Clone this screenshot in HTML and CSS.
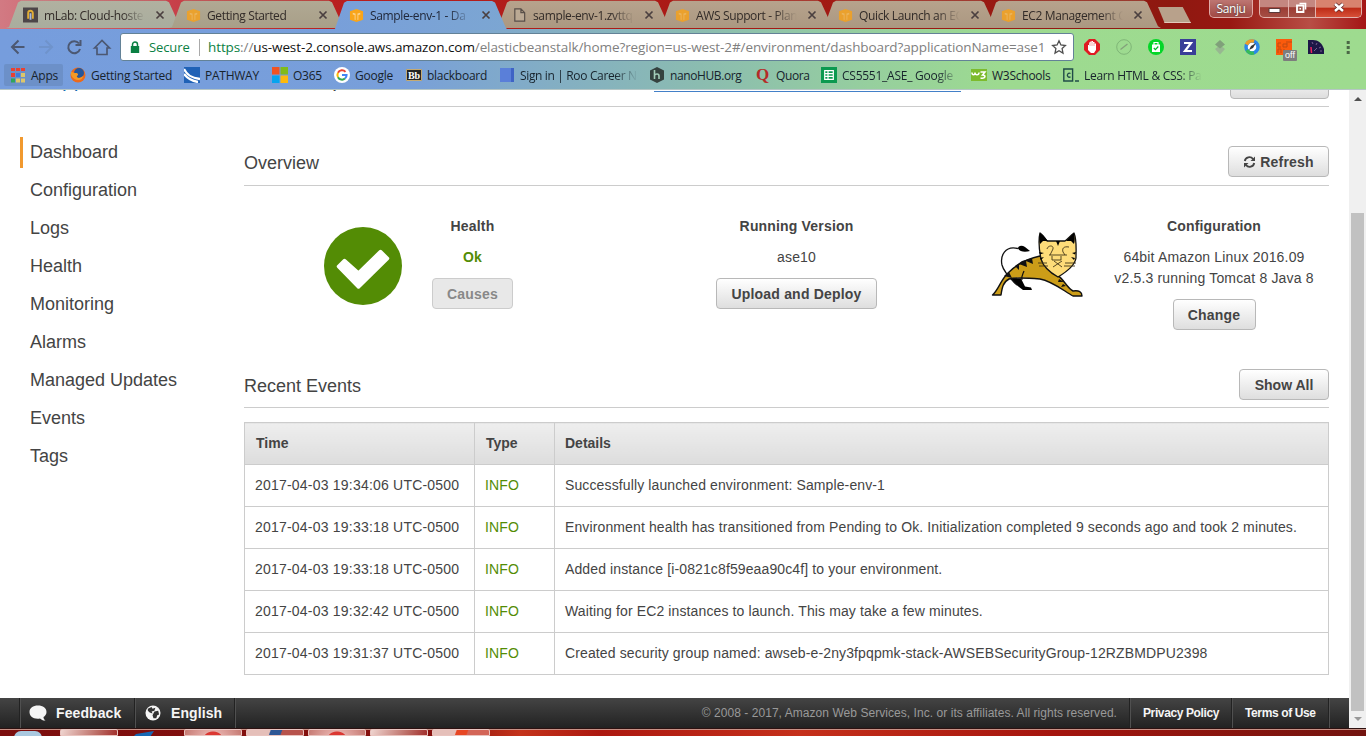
FILE: index.html
```html
<!DOCTYPE html>
<html lang="en">
<head>
<meta charset="utf-8">
<title>Sample-env-1 - Dashboard</title>
<link rel="stylesheet" href="styles.css">
</head>
<body>
<svg class="defs" width="0" height="0">
  <defs>
    <symbol id="cube" viewBox="0 0 16 16"><path fill="#f9a51a" d="M1 4l7-2.500 7 2.500v9l-7 2.500L1 13z"/><path fill="#fbd28b" d="M4 5.500l3 .8v7L6 13V8l-2-.6zM12 5.500l-3 .8v7l1-.3V8l2-.6z"/></symbol>
    <symbol id="cube-dim" viewBox="0 0 16 16"><path fill="#f5a11e" d="M1 4l7-2.500 7 2.500v9l-7 2.500L1 13z"/><path fill="#f6b955" d="M4 5.500l3 .8v7L6 13V8l-2-.6zM12 5.500l-3 .8v7l1-.3V8l2-.6z"/></symbol>
    <symbol id="close" viewBox="0 0 10 10"><path d="M1.500 1.500l7 7M8.500 1.500l-7 7" stroke="#4b4040" stroke-width="1.700" fill="none"/></symbol>
  </defs>
</svg>
<header class="chrome">
  <div class="tabstrip">
    <div class="tab t1"><svg class="fav" viewBox="0 0 16 16"><path fill="#4c4548" d="M0 0h16v16H0z"/><path d="M5.500 12V6a2.500 2.500 0 0 1 5 0v6" fill="none" stroke="#e1ad35" stroke-width="2"/><path d="M8 6v7" stroke="#a9b8dd" stroke-width="2"/></svg><span class="tl">mLab: Cloud-hoste</span><svg class="x"><use href="#close"/></svg></div>
    <div class="tab t2"><svg class="fav dim"><use href="#cube-dim"/></svg><span class="tl">Getting Started</span><svg class="x"><use href="#close"/></svg></div>
    <div class="tab active"><svg class="fav"><use href="#cube"/></svg><span class="tl">Sample-env-1 - Da</span><svg class="x"><use href="#close"/></svg></div>
    <div class="tab"><svg class="fav" viewBox="0 0 16 16"><path d="M3 1.500h6.500l4 4v9H3zM9.500 1.500v4h4" fill="#bba994" stroke="#594f49" stroke-width="1.300"/></svg><span class="tl">sample-env-1.zvttq</span><svg class="x"><use href="#close"/></svg></div>
    <div class="tab"><svg class="fav dim"><use href="#cube-dim"/></svg><span class="tl">AWS Support - Plan</span><svg class="x"><use href="#close"/></svg></div>
    <div class="tab"><svg class="fav dim"><use href="#cube-dim"/></svg><span class="tl">Quick Launch an EC</span><svg class="x"><use href="#close"/></svg></div>
    <div class="tab"><svg class="fav dim"><use href="#cube-dim"/></svg><span class="tl">EC2 Management C</span><svg class="x"><use href="#close"/></svg></div>
    <div class="newtab"></div>
    <div class="user">Sanju</div>
    <div class="winbtns">
      <span class="wb"><svg width="28" height="18"><path d="M9 8.500h11v4H9z" fill="#fff" stroke="#5b3a3a"/></svg></span>
      <span class="wb"><svg width="26" height="18"><path d="M10.500 3.500h6v6" fill="none" stroke="#fff" stroke-width="1.600"/><path d="M8 5.500h6.500V12H8z" fill="#a35a52" stroke="#fff" stroke-width="1.800"/><path d="M10.500 8h1.500v1.500h-1.500z" fill="#fff"/></svg></span>
      <span class="wb close"><svg width="46" height="18"><path d="M19 4l8 7M27 4l-8 7" stroke="#5b2020" stroke-width="4"/><path d="M19 4l8 7M27 4l-8 7" stroke="#fff" stroke-width="2.600"/></svg></span>
    </div>
  </div>
  <div class="toolbar">
    <svg class="nav" width="114" height="26" viewBox="0 0 114 26" fill="none" stroke="#4c5872" stroke-width="2">
      <path d="M24.500 13H12.500M18.500 6.500L12 13l6.500 6.500"/>
      <path d="M39 13h12M45.500 6.500L52 13l-6.500 6.500" stroke="#6f93cb"/>
      <path d="M79 9.500A6 6 0 1 0 80 15M80.500 6v5h-5"/>
      <path d="M94.500 14l7.500-7.500 7.500 7.500h-2.500v6.500h-10V14z" stroke-width="1.700"/>
    </svg>
    <div class="omnibox">
      <svg class="lock" viewBox="0 0 10 13"><path d="M2.500 6V3.500a2.500 2.500 0 0 1 5 0V6" fill="none" stroke="#0b8043" stroke-width="1.500"/><path d="M.8 5h8.400v7H.8z" fill="#0b8043"/></svg>
      <span class="secure">Secure</span>
      <span class="url"><i>https</i>://<b>us-west-2.console.aws.amazon.com</b>/elasticbeanstalk/home?region=us-west-2#/environment/dashboard?applicationName=ase1</span>
      <svg class="star" viewBox="0 0 16 16"><path d="M8 1.800l1.900 4.200 4.500.5-3.300 3.100.9 4.500L8 11.800 4 14.100l.9-4.500L1.600 6.500l4.500-.5z" fill="none" stroke="#4f4f4f" stroke-width="1.300"/></svg>
    </div>
    <div class="exts">
      <svg viewBox="0 0 16 16"><path fill="#e01b22" d="M5 0h6l5 5v6l-5 5H5l-5-5V5z"/><path fill="#fff" d="M4 6h1V3.500h1.300V2.500h1.400V2H9v1h1.500v1.500H12V11l-2 3H7l-3-3z"/><path d="M6 4v3M8 3v4M10 4v3" stroke="#e01b22" stroke-width=".4"/></svg>
      <svg viewBox="0 0 16 16"><circle cx="8" cy="8" r="7.300" fill="none" stroke="#7fb577"/><path d="M4.500 10.500L11.500 5" stroke="#83a07b" stroke-width="1.300"/></svg>
      <svg viewBox="0 0 16 16"><circle cx="8" cy="8" r="8" fill="#04d628"/><path d="M4 5.500h8V13H4z" fill="#fff"/><path d="M6 6V3.500h4V6" stroke="#fff" stroke-width="1.200" fill="none"/><path d="M5.800 9l1.600 1.600L10.300 7.500" fill="none" stroke="#04b528" stroke-width="1.200"/></svg>
      <svg viewBox="0 0 16 16"><path fill="#393e98" d="M0 0h16v16H0z"/><path d="M4 4h7L5 12h7" fill="none" stroke="#fff" stroke-width="2.200"/></svg>
      <svg viewBox="0 0 16 16"><path fill="#98b791" d="M8 6l5 4-5 5.500L3 10z"/><path fill="#80a07a" d="M8 1l5 4.500-5 4-5-4z"/></svg>
      <svg viewBox="0 0 16 16"><circle cx="8" cy="8" r="6" fill="#fff" stroke="#2c87e9" stroke-width="3.500"/><path d="M2.500 5.500A6 6 0 0 1 10 2.300" fill="none" stroke="#ef9d24" stroke-width="3.500"/><path d="M3 11a6 6 0 0 0 7 2.800" fill="none" stroke="#36bb58" stroke-width="3.500"/><path d="M5 11l2-4 5-3-3 5z" fill="#333"/></svg>
      <svg viewBox="0 0 16 16"><path fill="#fc5a0b" d="M0 0h16v16H0z"/><path d="M5 4H2v4h3M11 2v6H7V5h4M13 2v2M15 2v2M2 14v-4h3v4M8 10v4" fill="none" stroke="#c04a13"/></svg>
      <svg viewBox="0 0 16 16"><path fill="#1d1747" d="M0 1h5c5 0 9 3 11 9v5H0z"/><path d="M3.500 14L3 8" stroke="#ef245d" stroke-width="1.500"/><path d="M4 3l1 2M9 4L8 6M13 8l-2 1M14 12h-2M6 12l3-3" stroke="#77618f" fill="none"/></svg>
      <svg viewBox="0 0 16 16"><path d="M6.700 2h3v3h-3zM6.700 7h3v3h-3zM6.700 12h3v3h-3z" fill="#4b6746"/></svg>
      <span class="off">off</span>
    </div>
  </div>
  <nav class="bookmarks">
    <a class="w-apps"><svg viewBox="0 0 16 16"><path fill="#e84132" d="M1 1h4v3H1zM6 1h4v3H6zM11 1h4v3h-4zM1 6h4v4H1z"/><path fill="#ddc66b" d="M11 6h4v4h-4zM6 11.500h4v4H6zM11 11.500h4v4h-4z"/><path fill="#3f79dd" d="M6 6h4v4H6z"/><path fill="#2fa55a" d="M1 11.500h4v4H1z"/></svg>Apps</a>
    <a class="w-start"><svg viewBox="0 0 16 16"><circle cx="8" cy="8" r="7.500" fill="#eb6a1c"/><circle cx="9" cy="6" r="5" fill="#26569a"/><path d="M1 5c2 0 2 1 5 1 2 0 3 2 1 3-1 2 3 3 6 0 0 5-9 6-12-1z" fill="#f39a25"/></svg>Getting Started</a>
    <a class="w-path"><svg viewBox="0 0 16 16"><path fill="#1f61b6" d="M0 0h16v16H0z"/><path d="M0 2c3 6 7 9 16 10M0 7c3 4 7 7 14 8" fill="none" stroke="#fff" stroke-width="2.300"/></svg>PATHWAY</a>
    <a class="w-o365"><svg viewBox="0 0 16 16"><path fill="#f05323" d="M0 0h7.500v7.500H0z"/><path fill="#80bb19" d="M8.500 0H16v7.500H8.500z"/><path fill="#06a4ef" d="M0 8.500h7.500V16H0z"/><path fill="#fdb90c" d="M8.500 8.500H16V16H8.500z"/></svg>O365</a>
    <a class="w-goog"><svg viewBox="0 0 16 16"><circle cx="8" cy="8" r="8" fill="#fff"/><g fill="none" stroke-width="2"><path d="M11.500 4.800A4.600 4.600 0 0 0 4 5.800" stroke="#ea4335"/><path d="M4 5.800a4.600 4.600 0 0 0 0 4.400" stroke="#fbbc05"/><path d="M4 10.200a4.600 4.600 0 0 0 7 1.400" stroke="#34a853"/><path d="M11 11.600A4.600 4.600 0 0 0 12.600 8H8" stroke="#4285f4"/></g></svg>Google</a>
    <a class="w-bb"><svg viewBox="0 0 16 16"><path fill="#222" stroke="#c4aa72" d="M.5 2.500h15v11H.5z"/><text x="2" y="12" class="bbt">Bb</text></svg>blackboard</a>
    <a class="w-sign"><svg viewBox="0 0 16 16"><path fill="#5a7fd9" d="M1 1h14v14H1z"/><path fill="#3e63c5" d="M12 1h3v14h-3z"/></svg><span class="fade">Sign in | Roo Career N</span></a>
    <a class="w-nano"><svg viewBox="0 0 16 16"><path fill="#35423f" d="M8 0l7 3.500v9L8 16l-7-3.500v-9z"/><path d="M5.500 3v9M5.500 8.500c1-2 4.500-2 4.500.5v3" fill="none" stroke="#a3ccb8" stroke-width="1.600"/></svg>nanoHUB.org</a>
    <a class="w-quora"><svg viewBox="0 0 16 16"><text x="1" y="13" class="qt">Q</text></svg>Quora</a>
    <a class="w-cs"><svg viewBox="0 0 16 16"><path fill="#0b9950" d="M0 0h16v16H0z"/><path d="M3.700 3.700h8.600v8.600H3.700zM3.700 6.600h8.600M3.700 9.400h8.600M7 3.700v8.600" fill="none" stroke="#fff" stroke-width="1.200"/></svg><span class="fade">CS5551_ASE_ Google</span></a>
    <a class="w-w3"><svg viewBox="0 0 16 16"><path fill="#7dbb2d" d="M0 2h16v12H0z"/><path d="M1 5.500c0 3 3 3 3 0 0 3 4 3 4 0M9.500 5H14l-2.500 3c4 0 3 4-2 3" fill="none" stroke="#fff" stroke-width="1.500"/></svg>W3Schools</a>
    <a class="w-learn"><svg viewBox="0 0 16 16"><path d="M.8 2h8.800v12H.8z" fill="none" stroke="#204c48" stroke-width="1.400"/><path d="M7.500 6.500a2 2 0 1 0 0 3.300M12 14h4" stroke="#204c48" stroke-width="1.300" fill="none"/></svg><span class="fade">Learn HTML &amp; CSS: Pa</span></a>
  </nav>
</header>

<main class="viewport">
  <div class="page">
    <div class="crumbs"><span class="all">All Applications</span><span class="sep">›</span><span class="env">Sample-env-1</span><span class="meta">( Environment ID: e-2ny3fpqpmk, URL:</span><a class="envurl">Sample-env-1.zvttqpmkpp.us-west-2.elasticbeanstalk</a><span class="paren">)</span><span class="btn actions"></span></div>
    <div class="columns">
      <nav class="side">
        <a class="on">Dashboard</a><a>Configuration</a><a>Logs</a><a>Health</a><a>Monitoring</a><a>Alarms</a><a>Managed Updates</a><a>Events</a><a>Tags</a>
      </nav>
      <section class="content">
        <div class="heading"><h2>Overview</h2><span class="btn b-refresh"><svg width="13" height="12" viewBox="0 0 12 12"><path d="M1.300 5A4.600 4.600 0 0 1 9.500 3M10.700 7A4.600 4.600 0 0 1 2.500 9" fill="none" stroke="#444" stroke-width="1.900"/><path d="M11.500.500V5H7zM.5 11.500V7H5z" fill="#444"/></svg>Refresh</span></div>
        <div class="overview">
          <svg class="ok" viewBox="0 0 78 78"><circle cx="39" cy="39" r="39" fill="#538c05"/><path d="M14.500 39.500L20.500 33.500L34.500 46L56.500 24.500L63.500 31.500L34.500 60z" fill="#fff" stroke="#fff" stroke-width="3.500" stroke-linejoin="round"/></svg>
          <div class="stat s-health"><h3>Health</h3><p class="okt">Ok</p><span class="btn off-btn">Causes</span></div>
          <div class="stat s-ver"><h3>Running Version</h3><p>ase10</p><span class="btn b-up">Upload and Deploy</span></div>
          <svg class="tomcat" viewBox="0 0 105 80" stroke-linejoin="round">
            <path d="M25 53l4 5 5 4 4 3h9l-1-2.500-6-1-4-8z" fill="#000"/>
            <path d="M33 23.500C20 20 15 31 17 40c2 8 9 14 15 20" fill="none" stroke="#111" stroke-width="1.300"/>
            <path d="M33 23.500c0-3 4-3.500 7-1.500l5 4c-5 1.500-10 1-12-2.500z" fill="#000"/>
            <path d="M7.500 70C14 64 15 56 23 48c8-8 18-14 32-17l4 9 14 11c5 2 9 12 15 15 6-1 9 1 9 5h-9C79 66 67 56 55 54c-12-1-24-2-31 0-6 3-7 9-8 16z" fill="#cc9d18" stroke="#111" stroke-width="1.400"/>
            <path d="M19 51l8 2-3-6zM30 41l4 4v-6l8 3-1-6 7 3-1-6-10 3zM74 54l5 3-6 0M78 59l3 2-5 1" fill="#111"/>
            <path d="M39 46c-1 3-3 5-2 9" fill="none" stroke="#111" stroke-width="1.200"/>
            <path d="M55 8c3 2 5 5 7 8h18c3-2 6-6 9-8 3 7 2 15 2 25-1 7-8 13-18 19-9-5-15-11-17-18-2-10-3-18-1-26z" fill="#fedc79" stroke="#111" stroke-width="1.300"/>
            <path d="M55 8c-1 5-1 8 0 11l3-3h5c-3-3-5-6-8-8zM89 8c1 5 1 8 0 11l-3-3h-5c3-3 5-6 8-8zM71 16l2 5 2-5zM54 27l5 1-4 1.500M91 27l-4 1 3 1.500M55 33l4-1-3 3M90 33l-4-1 3 3" fill="#000"/>
            <path d="M62 24c1-4 7-4 6 0l-3 6M84 22c-6-1-7 2-6 5l2 3M64 30h18M67 31v4h9v-4M68 42l9-6M69 36l8 6M53 38h9M54 41h9M80 38h11M79 41h11" fill="none" stroke="#443617" stroke-width=".9"/>
          </svg>
          <div class="stat s-conf"><h3>Configuration</h3><p>64bit Amazon Linux 2016.09<br>v2.5.3 running Tomcat 8 Java 8</p><span class="btn b-change">Change</span></div>
        </div>
        <div class="heading events"><h2>Recent Events</h2><span class="btn b-show">Show All</span></div>
        <table>
          <thead><tr><th class="c1">Time</th><th class="c2">Type</th><th class="c3">Details</th></tr></thead>
          <tbody>
            <tr><td class="time">2017-04-03 19:34:06 UTC-0500</td><td class="info">INFO</td><td>Successfully launched environment: Sample-env-1</td></tr>
            <tr><td class="time">2017-04-03 19:33:18 UTC-0500</td><td class="info">INFO</td><td>Environment health has transitioned from Pending to Ok. Initialization completed 9 seconds ago and took 2 minutes.</td></tr>
            <tr><td class="time">2017-04-03 19:33:18 UTC-0500</td><td class="info">INFO</td><td>Added instance [i-0821c8f59eaa90c4f] to your environment.</td></tr>
            <tr><td class="time">2017-04-03 19:32:42 UTC-0500</td><td class="info">INFO</td><td>Waiting for EC2 instances to launch. This may take a few minutes.</td></tr>
            <tr><td class="time">2017-04-03 19:31:37 UTC-0500</td><td class="info">INFO</td><td>Created security group named: awseb-e-2ny3fpqpmk-stack-AWSEBSecurityGroup-12RZBMDPU2398</td></tr>
          </tbody>
        </table>
      </section>
    </div>
    <footer>
      <span class="f-feed"><svg viewBox="0 0 18 17"><path d="M9 .5c5 0 8.500 2.600 8.500 6.500 0 2.500-1.500 4-3 5 0 1.500.6 2.500 2 3.500-2 .3-4-.5-5.500-2C4 14.500.5 11 .5 7S4 .5 9 .5z" fill="#f5f5f5"/></svg>Feedback</span>
      <span class="f-lang"><svg viewBox="0 0 17 17"><circle cx="8.500" cy="8.500" r="8" fill="#f5f5f5"/><path d="M3 4l4-2 1 2 3-1-1 3-3 1 1 2-3-1-2-2zM10 7l4-1 1 4-2 1-1 3-3 0-1-3z" fill="#333"/></svg>English</span>
      <span class="copy">© 2008 - 2017, Amazon Web Services, Inc. or its affiliates. All rights reserved.</span>
      <span class="f-priv">Privacy Policy</span>
      <span class="f-terms">Terms of Use</span>
      <span class="f-end"></span>
    </footer>
  </div>
  <div class="scroll"><span class="up"></span><span class="thumb"></span><span class="down"></span></div>
</main>
<div class="taskbar">
  <i class="orb"></i><i class="task"></i><svg width="62" height="6"><path d="M14 3l18-3-4 6H11z" fill="#1768b4"/></svg><i class="task red"></i><i class="task blue"></i><i class="task red"></i><i class="task"></i><i class="task orange"></i>
</div>
</body>
</html>
```
FILE: styles.css
```css
* { box-sizing: border-box; }
body { margin: 0; width: 1366px; height: 736px; overflow: hidden; display: flex; flex-direction: column; background: #fff; font-family: "Liberation Sans", Arial, sans-serif; }
.defs { position: absolute; }
svg { flex: none; }

/* Browser frame */
.chrome { position: relative; height: 90px; flex: none; font-family: "Open Sans", "Noto Sans", sans-serif; background: linear-gradient(90deg, #769ddd 0, #789fda 400px, #83aec4 550px, #8bbcb0 700px, #96cf9e 870px, #9dda90 1000px, #9edb8f 100%); border-bottom: 1px solid #b5c6c5; }
.tabstrip { height: 29px; display: flex; padding-left: 6px; background: linear-gradient(90deg, #d27a83 0, #c94650 150px, #b91f20 330px, #a91a15 700px, #8e1810 1170px, #981812 1230px, #b84e45 1310px, #a41515 100%); }
.tab { width: 177px; height: 28px; margin-right: -14px; padding: 2px 13px 0 17px; display: flex; align-items: center; background: linear-gradient(#b7a38d, #ab9881); clip-path: polygon(0 100%, 3px 96%, 12px 9%, 15px 3%, 160px 3%, 163px 8%, 174px 94%, 177px 100%); flex: none; font-size: 12px; letter-spacing: -.36px; color: #322b28; }
.t1 { background: linear-gradient(#b1b1a0, #a9ad9e); }
.t2 { background: linear-gradient(#b1a994, #a89f88); }
.tab.active { height: 30px; padding-bottom: 2px; background: linear-gradient(90deg, #789fda, #7ca6d2); color: #20283a; position: relative; z-index: 1; }
.fav { width: 15px; height: 16px; }
.dim { opacity: .85; }
.tl { width: 103px; margin-left: 6px; white-space: nowrap; overflow: hidden; -webkit-mask-image: linear-gradient(90deg, #000 76%, transparent 98%); }
.x { width: 10px; height: 10px; margin-left: 8px; }
.newtab { width: 33px; height: 16px; margin: 7px 0 0 11px; background: #b8a18b; border-bottom: 1px solid #e2c9ba; clip-path: polygon(0 0, 75% 0, 100% 100%, 20% 100%); }
.user { width: 44px; height: 18px; margin-left: 18px; background: linear-gradient(#bd7672, #a14944); border: 1px solid #e0aca9; border-top: 0; border-radius: 0 0 5px 5px; color: #fff; font-size: 12px; line-height: 17px; letter-spacing: -.4px; text-align: center; text-shadow: 0 0 2px #333; }
.winbtns { width: 103px; height: 18px; margin-left: 6px; display: flex; border: 1px solid #e3b3ad; border-top: 0; border-radius: 0 0 5px 5px; overflow: hidden; background: linear-gradient(#c48780 40%, #9c3c34 45%, #a54e44); }
.wb { height: 18px; border-right: 1px solid #e3b3ad; }
.wb.close { border: 0; background: linear-gradient(#d8836e 40%, #bd2b16 45%, #d9543c); }
.toolbar { height: 35px; display: flex; align-items: center; padding: 1px 0 0; }
.nav { margin-right: 6px; }
.omnibox { width: 954px; height: 28px; display: flex; align-items: center; background: #fff; border: 1px solid #638297; border-radius: 3px; padding-left: 9px; font-size: 13.5px; white-space: nowrap; }
.lock { width: 10px; height: 13px; }
.secure { color: #0b8043; width: 51px; margin-left: 9px; border-right: 1px solid #aaa; line-height: 16px; height: 17px; font-size: 13px; letter-spacing: -.1px; flex: none; }
.url { margin-left: 8px; width: 837px; flex: none; color: #808080; letter-spacing: -.1px; }
.url i { color: #0b8043; font-style: normal; }
.url b { color: #111; font-weight: 400; }
.star { width: 16px; height: 16px; margin-left: 6px; }
.exts { position: relative; display: flex; gap: 16px; margin-left: 10px; }
.exts svg { width: 16px; height: 16px; }
.off { position: absolute; left: 199px; top: 11px; width: 14px; height: 11px; background: #7d7d7d; color: #fff; font: 9px/10px "Liberation Sans", sans-serif; text-align: center; border-radius: 1px; }
.bookmarks { display: flex; height: 22px; padding-left: 4px; font-size: 12px; letter-spacing: -.25px; color: #17232c; }
.bookmarks a { display: flex; align-items: center; gap: 5px; flex: none; white-space: nowrap; height: 22px; }
.bookmarks svg { width: 16px; height: 16px; }
.fade { width: 118px; overflow: hidden; -webkit-mask-image: linear-gradient(90deg, #000 80%, transparent); }
.bookmarks .w-apps { width: 59px; padding-left: 6px; margin-right: 7px; background: #6c90c8; border-radius: 2px; }
.w-start { width: 114px; } .w-path { width: 88px; } .w-o365 { width: 62px; } .w-goog { width: 72px; } .w-bb { width: 93px; } .w-sign { width: 150px; letter-spacing: -.35px; } .w-nano { width: 106px; letter-spacing: -.4px; } .w-quora { width: 66px; } .w-cs { width: 150px; } .w-w3 { width: 92px; } .w-learn { width: 140px; letter-spacing: -.3px; }
.w-quora { letter-spacing: -.4px; }
.bbt { font: bold 10px "Liberation Serif", serif; fill: #fff; }
.qt { font: bold 17px "Liberation Serif", serif; fill: #b52b27; }

/* Page */
.viewport { height: 638px; display: flex; flex: none; }
.page { width: 1349px; display: flex; flex-direction: column; color: #444; }
.crumbs { height: 17px; margin: 0 20px; border-bottom: 1px solid #ccc; display: flex; flex: none; overflow: hidden; white-space: nowrap; font-size: 13px; }
.all, .sep, .env { height: 24px; font-size: 21px; line-height: 20px; }
.crumbs > .all, .crumbs > .sep, .crumbs > .env { margin-top: -20px; }
.all { color: #146eb4; width: 156px; }
.sep { width: 113px; }
.env { width: 148px; }
.meta, .envurl, .paren { height: 20px; margin-top: -18px; line-height: 20px; }
.meta { width: 217px; letter-spacing: -.25px; }
.envurl { color: #146eb4; border-bottom: 1px solid #4380c8; width: 307px; }
.paren { width: 248px; padding-left: 1px; }
.btn { display: inline-flex; align-items: center; justify-content: center; height: 31px; border: 1px solid #b8b8b8; border-radius: 4px; background: linear-gradient(#fff, #dedede); font-size: 14px; font-weight: 700; letter-spacing: .2px; color: #444; white-space: nowrap; }
.crumbs > .actions { width: 99px; height: 27px; margin: -18px 0 0 21px; }
.columns { display: flex; flex: 1; }
.side { width: 244px; padding: 30px 0 0 20px; display: flex; flex-direction: column; gap: 7px; }
.side a { height: 31px; line-height: 30px; padding-left: 7px; border-left: 3px solid transparent; font-size: 18px; }
.side .on { border-color: #f1992f; }
.content { width: 1085px; padding-top: 39px; }
.heading { height: 40px; display: flex; justify-content: space-between; border-bottom: 1px solid #ccc; }
.heading h2 { margin: 6px 0 0; font-size: 18px; line-height: 22px; font-weight: 400; }
.b-refresh { width: 101px; gap: 4px; }
.b-show { width: 90px; letter-spacing: 0; }
.overview { display: flex; height: 183px; padding-top: 30px; }
.ok { width: 78px; height: 78px; margin: 11px 0 0 80px; }
.stat { display: flex; flex-direction: column; align-items: center; font-size: 14px; line-height: 21px; letter-spacing: .17px; text-align: center; }
.stat h3 { margin: 0; font-size: 14px; }
.stat p { margin: 10px 0; white-space: nowrap; }
.stat .btn { padding-top: 1px; }
.s-health { width: 81px; margin-left: 30px; }
.s-ver { width: 161px; margin-left: 203px; }
.s-conf { width: 210px; margin-left: 19px; }
.stat .okt { color: #538c05; font-weight: 700; }
.off-btn { width: 81px; color: #888; background: #e8e8e8; border-color: #ccc; }
.b-up { width: 161px; }
.b-change { width: 83px; }
.tomcat { width: 105px; height: 80px; margin: 9px 0 0 108px; }
.events { height: 39px; }
table { margin-top: 14px; width: 1085px; table-layout: fixed; border-collapse: collapse; font-size: 14px; letter-spacing: .12px; }
th, td { height: 42px; padding: 0 10px 2px; border: 1px solid #ccc; text-align: left; }
th { background: linear-gradient(#eee, #ddd); padding-left: 11px; letter-spacing: 0; }
.c1 { width: 230px; } .c2 { width: 80px; } .c3 { padding-left: 10px; }
.time { letter-spacing: .21px; }
.info { color: #538c05; }
footer { height: 30px; flex: none; display: flex; background: linear-gradient(#444, #222); padding-left: 19px; color: #f5f5f5; font-size: 14px; font-weight: 700; line-height: 30px; }
footer span { display: flex; align-items: center; flex: none; border-left: 1px solid #222; box-shadow: inset 1px 0 #505050; white-space: nowrap; }
.f-feed { width: 115px; padding-left: 9px; gap: 9px; letter-spacing: .1px; }
.f-feed svg { width: 18px; height: 17px; }
.f-lang { width: 100px; padding-left: 10px; gap: 10px; letter-spacing: .1px; }
.f-lang svg { width: 16px; height: 16px; }
footer .copy { width: 895px; padding-right: 12px; justify-content: flex-end; color: #999; font-size: 12px; font-weight: 400; letter-spacing: .05px; }
.f-priv { width: 102px; }
.f-terms { width: 97px; }
footer .f-priv, footer .f-terms { padding-left: 13px; font-size: 12px; letter-spacing: -.38px; }
.f-end { width: 21px; }
.scroll { width: 17px; background: #f0f0f0; display: flex; flex-direction: column; align-items: center; }
.up { border: 4px solid transparent; border-top: 0; border-bottom: 4px solid #505050; margin-top: 7px; }
.thumb { width: 13px; height: 498px; margin-top: 112px; background: #c1c1c1; }
.down { border: 4px solid transparent; border-bottom: 0; border-top: 4px solid #999; margin-top: 6px; }
.taskbar { height: 8px; display: flex; align-items: flex-start; border-top: 1px solid #2d1110; background: linear-gradient(90deg, #7c0e0e, #86100d 440px, #c4331b 520px, #ac1810 600px, #c5301b 800px, #a5150e 1050px, #72140f 1366px); box-shadow: inset 0 1px #c89186; }
.taskbar svg { margin-top: 2px; }
.orb { width: 28px; height: 7px; margin: 2px 18px 0 14px; border-radius: 14px 14px 0 0; background: #a9c8df; }
.task { width: 58px; height: 7px; margin-right: 4px; border-radius: 2px 2px 0 0; background: linear-gradient(110deg, #efd4cf, #bb6b64 65%, #a22f2c); border: 1px solid #e9c4bf; }
.task.red { background: radial-gradient(circle at 50% 13px, #db3732 11px, #e3aaa5 12px, #c77c75 30px); }
.task.blue { background: linear-gradient(110deg, #e5bfb9 40%, #2e5795 42% 60%, #b7534c 62%); }
.task.orange { background: linear-gradient(110deg, #e5bfb9 40%, #e74724 42% 60%, #d36557 62%); }
```
